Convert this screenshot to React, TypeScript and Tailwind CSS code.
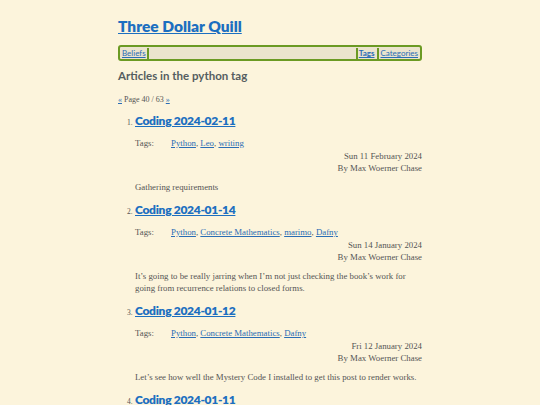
const articles = [
  {
    title: "Coding 2024-02-11",
    tags: ["Python", "Leo", "writing"],
    date: "Sun 11 February 2024",
    summary: "Gathering requirements",
  },
  {
    title: "Coding 2024-01-14",
    tags: ["Python", "Concrete Mathematics", "marimo", "Dafny"],
    date: "Sun 14 January 2024",
    summary:
      "It\u2019s going to be really jarring when I\u2019m not just checking the book\u2019s work for going from recurrence relations to closed forms.",
  },
  {
    title: "Coding 2024-01-12",
    tags: ["Python", "Concrete Mathematics", "Dafny"],
    date: "Fri 12 January 2024",
    summary:
      "Let\u2019s see how well the Mystery Code I installed to get this post to render works.",
  },
  {
    title: "Coding 2024-01-11",
    tags: ["Python"],
    date: "Thu 11 January 2024",
    summary: "",
  },
];

const heading = { fontFamily: 'Lato, "Noto Sans", sans-serif' };
const body = { fontFamily: '"Liberation Serif", "DejaVu Serif", serif' };

export default function App() {
  return (
    <div className="h-[405px] w-full overflow-hidden bg-[#fcf4dc] text-[#555]" style={body}>
      <div className="mx-auto w-[304px] pt-[14px]">
        {/* Header */}
        <h1 className="text-[15.5px] font-extrabold leading-[24px]" style={heading}>
          <a href="#" className="text-[#1c6fc0] underline">
            Three Dollar Quill
          </a>
        </h1>

        {/* Nav */}
        <nav
          className="mt-[7px] flex h-[16px] items-center rounded-[3px] border-2 border-[#6b9a23] bg-[#ebe4cd] px-[2px] text-[8px] leading-none"
          style={heading}
        >
          <a href="#" className="text-[#2a6db5] underline">Beliefs</a>
          <span className="ml-[1px] h-[11px] w-[2px] bg-[#6b9a23]" />
          <span className="flex-1" />
          <span className="mr-[1px] h-[11px] w-[2px] bg-[#6b9a23]" />
          <a href="#" className="font-bold text-[#2a6db5] underline">Tags</a>
          <span className="mx-[2px] h-[11px] w-[2px] bg-[#6b9a23]" />
          <a href="#" className="text-[#2a6db5] underline">Categories</a>
        </nav>

        <h2 className="mt-[6px] text-[11.5px] font-bold leading-[18px] text-[#555d60]" style={heading}>
          Articles in the python tag
        </h2>

        <p className="mt-[10px] text-[8px] leading-[10px]">
          <a href="#" className="text-[#2a6db5] underline">«</a> Page 40 / 63{" "}
          <a href="#" className="text-[#2a6db5] underline">»</a>
        </p>

        <ol className="mt-[7px] pl-[17px]">
          {articles.map((a, i) => (
            <li key={a.title} className="mb-[8px]">
              <div className="flex h-[18px] items-baseline">
                <span className="-ml-[8px] w-[8px] text-[7.5px]">{i + 1}.</span>
                <a
                  href="#"
                  className="text-[12px] font-extrabold leading-[18px] tracking-[-0.3px] text-[#1c6fc0] underline"
                  style={heading}
                >
                  {a.title}
                </a>
              </div>
              <div className="mt-[7px] flex text-[8.8px] leading-[12px]">
                <span className="w-[36px]">Tags:</span>
                <span>
                  {a.tags.map((t, j) => (
                    <span key={t}>
                      <a href="#" className="text-[#2a6db5] underline">{t}</a>
                      {j < a.tags.length - 1 ? ", " : ""}
                    </span>
                  ))}
                </span>
              </div>
              <div className="mt-[1px] text-right text-[8.8px] leading-[12px]">
                <div>{a.date}</div>
                <div>By Max Woerner Chase</div>
              </div>
              {a.summary && (
                <p className="mt-[7px] text-[8.8px] leading-[12px]">{a.summary}</p>
              )}
            </li>
          ))}
        </ol>
      </div>
    </div>
  );
}
